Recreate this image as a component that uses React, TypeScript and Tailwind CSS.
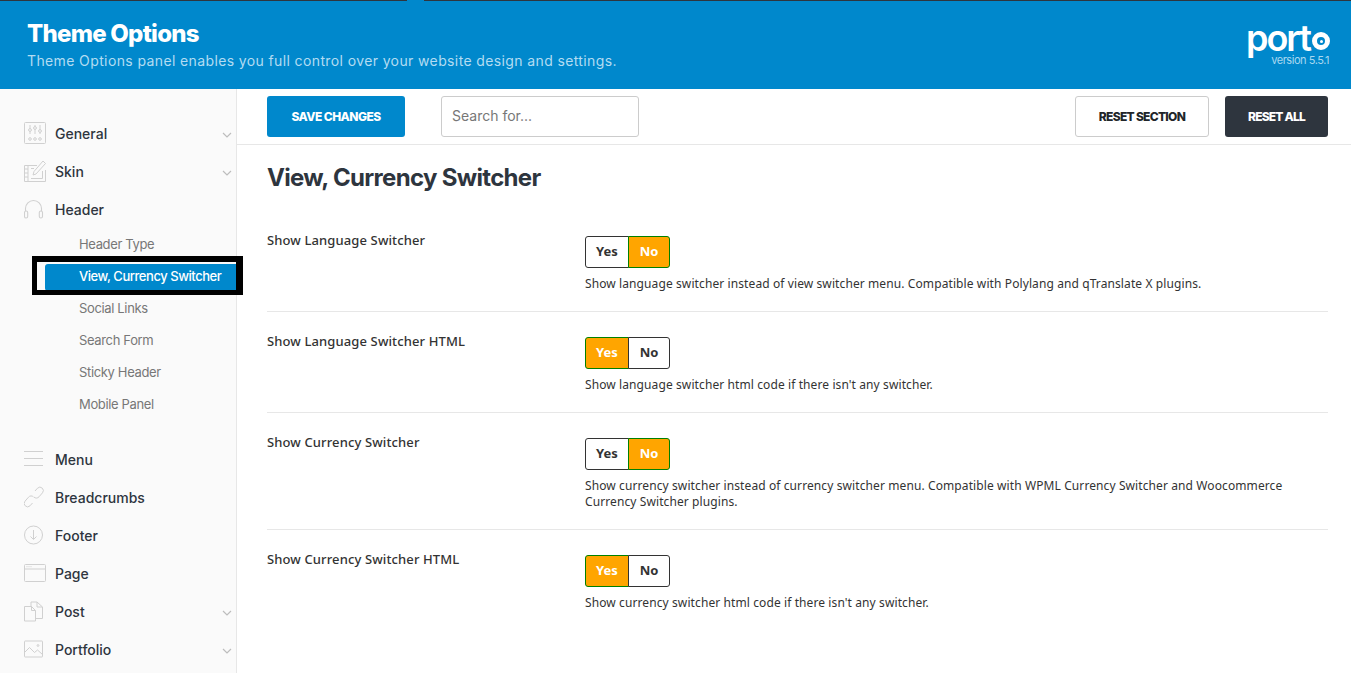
import type { ReactNode } from 'react'

const ICON = 'w-[22px] h-[22px] text-[#d0d0d0] shrink-0'

function Chevron() {
  return (
    <svg className="w-[10px] h-[6px] text-[#bdbdbd] ml-auto mr-[3px] mt-[3px]" viewBox="0 0 10 6" fill="none" stroke="currentColor" strokeWidth="1.2">
      <path d="M1 1l4 4 4-4" />
    </svg>
  )
}

const icons: Record<string, ReactNode> = {
  general: (
    <svg className={ICON} viewBox="0 0 22 22" fill="none" stroke="currentColor">
      <rect x="0.5" y="0.5" width="21" height="21" rx="1" />
      <path d="M6 3v9M11 3v9M16 3v9" />
      <circle cx="6" cy="8" r="1.4" fill="#fafafa" />
      <circle cx="11" cy="6" r="1.4" fill="#fafafa" />
      <circle cx="16" cy="9" r="1.4" fill="#fafafa" />
      <circle cx="6" cy="17" r="1.3" />
      <circle cx="11" cy="17" r="1.3" />
      <circle cx="16" cy="17" r="1.3" />
    </svg>
  ),
  skin: (
    <svg className={ICON} viewBox="0 0 22 22" fill="none" stroke="currentColor">
      <path d="M13 5.500H0.500v16h21V10" />
      <path d="M4 5.500v16M0.500 9h3.500M0.500 13h3.500M0.500 17h3.500" />
      <path d="M9 15l1-3.500L19 1l2.500 2.500L12 14z" />
      <path d="M7 8.500h3M7 18.500h11.500V11" />
    </svg>
  ),
  header: (
    <svg className={ICON} viewBox="0 0 22 22" fill="none" stroke="currentColor" strokeWidth="1.1">
      <path d="M1.500 13V10.500a8 8 0 0 1 16 0V13" />
      <rect x="0.500" y="13" width="3.200" height="7" rx="1.600" />
      <rect x="15.300" y="13" width="3.200" height="7" rx="1.600" />
    </svg>
  ),
  menu: (
    <svg className={ICON} viewBox="0 0 22 22" fill="none" stroke="currentColor" strokeWidth="1.2">
      <path d="M0 3.500h19M0 10.500h19M0 17.500h19" />
    </svg>
  ),
  breadcrumbs: (
    <svg className={ICON} viewBox="0 0 22 22" fill="none" stroke="currentColor">
      <path d="M11 5l2.500-2.800a3.400 3.400 0 0 1 5 4.600l-3.500 4a3.400 3.400 0 0 1-5 .3" />
      <path d="M8.500 17l-2.500 2.800a3.400 3.400 0 0 1-5-4.600l3.500-4a3.400 3.400 0 0 1 5-.3" />
    </svg>
  ),
  footer: (
    <svg className={ICON} viewBox="0 0 22 22" fill="none" stroke="currentColor">
      <circle cx="9.500" cy="11" r="9" />
      <path d="M9.500 6v9M6.500 12.500l3 3 3-3" />
    </svg>
  ),
  page: (
    <svg className={ICON} viewBox="0 0 22 22" fill="none" stroke="currentColor">
      <rect x="0.500" y="2.500" width="21" height="17" rx="1" />
      <path d="M0.500 7h21" />
      <path d="M2.500 4.700h1M4.500 4.700h1M6.500 4.700h1" />
    </svg>
  ),
  post: (
    <svg className={ICON} viewBox="0 0 22 22" fill="none" stroke="currentColor">
      <path d="M0.500 6.500h7l4 4v10.500h-11z" />
      <path d="M7.500 6.500v4h4" />
      <path d="M7 6.500V2h6l5.500 5v11.500h-7" />
      <path d="M13 2v5h5.500" />
    </svg>
  ),
  portfolio: (
    <svg className={ICON} viewBox="0 0 22 22" fill="none" stroke="currentColor">
      <rect x="0.500" y="3" width="18" height="16" rx="0.500" />
      <path d="M0.500 14.500l5-5 5 5 3-2.500 5 4.500" />
      <circle cx="14" cy="7.500" r="0.900" />
    </svg>
  ),
}

function NavItem({ name, icon, arrow }: { name: string; icon: string; arrow?: boolean }) {
  return (
    <div className="flex items-center h-[38px] pb-[2px] pl-[24px] pr-[1px]">
      <div className="w-[31px] shrink-0">{icons[icon]}</div>
      <span className="text-[14px] font-medium text-[#2e353e]">{name}</span>
      {arrow && <Chevron />}
    </div>
  )
}

function SubItem({ name, active }: { name: string; active?: boolean }) {
  return (
    <div className="h-[32px] flex items-center">
      {active ? (
        <div className="ml-[45px] w-[191px] h-[27px] bg-[#0088cc] rounded-l-[3px] pl-[34px] flex items-center text-[13px] text-white font-medium tracking-[-0.45px]">
          {name}
        </div>
      ) : (
        <span className="ml-[79px] text-[13px] text-[#777777] tracking-[-0.35px]">{name}</span>
      )}
    </div>
  )
}

function Toggle({ on }: { on: 'Yes' | 'No' }) {
  const active = 'bg-[#ffa500] text-white border-[#008000]'
  const idle = 'bg-white text-[#333333] border-[#333333]'
  return (
    <div className="flex w-[85px] h-[32px] text-[13px] font-bold">
      <div className={`w-[44px] flex items-center justify-center border rounded-l-[3px] ${on === 'Yes' ? active : idle}`}>Yes</div>
      <div className={`w-[42px] -ml-px flex items-center justify-center border rounded-r-[3px] ${on === 'No' ? active : idle}`}>No</div>
    </div>
  )
}

function OptionRow({ label, on, desc, last }: { label: string; on: 'Yes' | 'No'; desc: string; last?: boolean }) {
  return (
    <div className={`flex pt-[25px] pb-[19px] ${last ? '' : 'border-b border-[#e7e7e7]'}`}>
      <div className="w-[318px] text-[13px] leading-[18px] font-medium text-[#333333] -mt-[5px] tracking-[0.12px]">{label}</div>
      <div className="flex-1">
        <Toggle on={on} />
        <p className="mt-[8px] text-[12px] leading-[16px] text-[#333333] tracking-[0.1px]">{desc}</p>
      </div>
    </div>
  )
}

export default function App() {
  return (
    <div className="relative h-screen overflow-hidden bg-white font-['Inter',sans-serif]">
      {/* Banner */}
      <header className="relative h-[89px] bg-[#0088cc] border-t border-[#2e353e] flex items-start justify-between pl-[27px] pr-[22px]">
        <span className="absolute left-[407px] -top-px w-[17px] h-[1px] bg-[#0088cc]" />
        <div>
          <h1 className="mt-[18px] text-[24px] leading-[30px] font-extrabold text-white tracking-[-0.75px]">Theme Options</h1>
          <p className="mt-[2px] text-[14px] leading-[20px] text-[#b3dcf2] tracking-[0.38px]">
            Theme Options panel enables you full control over your website design and settings.
          </p>
        </div>
        <div className="mt-[21px] flex flex-col items-end">
          <div className="flex items-center text-white font-semibold text-[36px] leading-[32px] tracking-[-2px]">
            port
            <span className="ml-[2px] mt-[6px] -mr-px w-[18px] h-[18px] rounded-full border-[5px] border-white flex items-center justify-center">
              <span className="w-[3px] h-[3px] rounded-full bg-white" />
            </span>
          </div>
          <span className="text-[11px] leading-[12px] text-[#a9d8f0] tracking-[-0.45px]">version 5.5.1</span>
        </div>
      </header>

      <div className="flex">
        {/* Sidebar */}
        <aside className="w-[237px] shrink-0 h-[584px] overflow-hidden bg-[#fafafa] border-r border-[#e7e7e7] pt-[26px]">
          <NavItem name="General" icon="general" arrow />
          <NavItem name="Skin" icon="skin" arrow />
          <NavItem name="Header" icon="header" />
          <SubItem name="Header Type" />
          <SubItem name="View, Currency Switcher" active />
          <SubItem name="Social Links" />
          <SubItem name="Search Form" />
          <SubItem name="Sticky Header" />
          <SubItem name="Mobile Panel" />
          <div className="h-[20px]" />
          <NavItem name="Menu" icon="menu" />
          <NavItem name="Breadcrumbs" icon="breadcrumbs" />
          <NavItem name="Footer" icon="footer" />
          <NavItem name="Page" icon="page" />
          <NavItem name="Post" icon="post" arrow />
          <NavItem name="Portfolio" icon="portfolio" arrow />
        </aside>

        {/* Main */}
        <main className="flex-1 min-w-0">
          <div className="h-[56px] border-b border-[#e7e7e7] flex items-start pt-[7px] pl-[30px] pr-[23px]">
            <button className="w-[138px] h-[41px] bg-[#0088cc] rounded-[3px] text-white text-[12px] font-extrabold tracking-[-0.55px]">SAVE CHANGES</button>
            <div className="ml-[36px] w-[198px] h-[41px] pb-[2px] border border-[#cccccc] rounded-[3px] flex items-center pl-[10px] text-[14px] text-[#777777]">Search for...</div>
            <button className="ml-auto w-[134px] h-[41px] border border-[#cccccc] rounded-[3px] text-[#212529] text-[12px] font-extrabold tracking-[-0.7px]">RESET SECTION</button>
            <button className="ml-[16px] w-[103px] h-[41px] bg-[#2e353e] rounded-[3px] text-white text-[12px] font-extrabold tracking-[-0.8px]">RESET ALL</button>
          </div>
          <div className="pl-[30px] pr-[23px]">
            <h2 className="mt-[17px] mb-[17px] text-[24px] leading-[32px] font-bold text-[#2e353e] tracking-[-0.68px]">View, Currency Switcher</h2>
            <div className="font-['Noto_Sans',sans-serif]">
              <OptionRow
                label="Show Language Switcher"
                on="No"
                desc="Show language switcher instead of view switcher menu. Compatible with Polylang and qTranslate X plugins."
              />
              <OptionRow label="Show Language Switcher HTML" on="Yes" desc="Show language switcher html code if there isn't any switcher." />
              <OptionRow
                label="Show Currency Switcher"
                on="No"
                desc="Show currency switcher instead of currency switcher menu. Compatible with WPML Currency Switcher and Woocommerce Currency Switcher plugins."
              />
              <OptionRow label="Show Currency Switcher HTML" on="Yes" desc="Show currency switcher html code if there isn't any switcher." last />
            </div>
          </div>
        </main>
      </div>

      {/* Highlight box around the active item */}
      <div className="absolute left-[32px] top-[256px] w-[211px] h-[39px] border-[5px] border-t-[6px] border-r-[7px] border-black pointer-events-none" />
    </div>
  )
}
